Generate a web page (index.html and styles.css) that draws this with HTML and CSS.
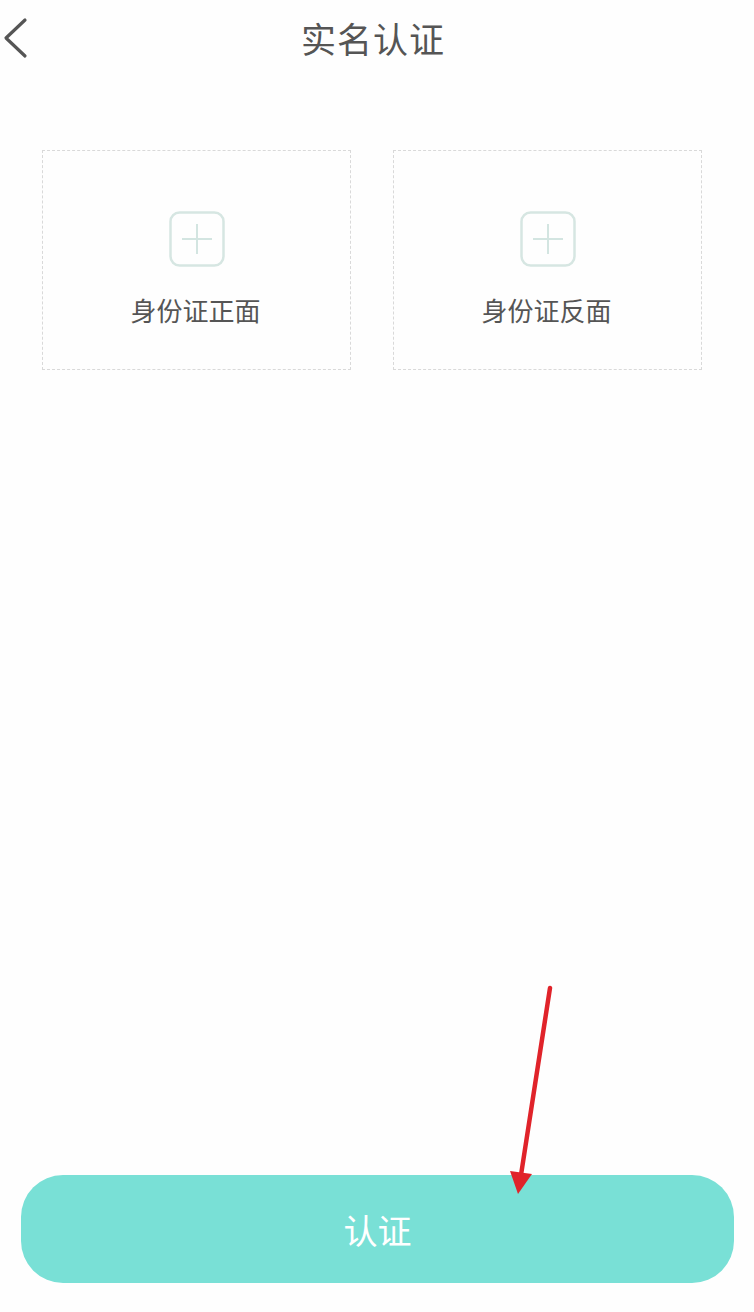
FILE: index.html
```html
<!DOCTYPE html>
<html lang="zh">
<head>
<meta charset="utf-8">
<link rel="stylesheet" href="styles.css">
</head>
<body>
<div class="page">
  <header class="header">
    <svg class="back" width="30" height="44" viewBox="0 0 30 44"><path d="M24 3 L5 21 L24 39" fill="none" stroke="#555" stroke-width="3.2" stroke-linecap="round" stroke-linejoin="round"/></svg>
    <h1 class="title">实名认证</h1>
  </header>
  <section class="cards">
    <div class="card">
      <svg class="plus" width="56" height="56" viewBox="0 0 56 56"><rect x="1.5" y="1.5" width="53" height="53" rx="9" fill="none" stroke="#d6e6e2" stroke-width="2.5"/><path d="M28 13 V43 M13 28 H43" stroke="#d3e5e1" stroke-width="2"/></svg>
      <div class="label">身份证正面</div>
    </div>
    <div class="card">
      <svg class="plus" width="56" height="56" viewBox="0 0 56 56"><rect x="1.5" y="1.5" width="53" height="53" rx="9" fill="none" stroke="#d6e6e2" stroke-width="2.5"/><path d="M28 13 V43 M13 28 H43" stroke="#d3e5e1" stroke-width="2"/></svg>
      <div class="label">身份证反面</div>
    </div>
  </section>
  <button class="submit">认证</button>
  <svg class="arrow" width="90" height="230" viewBox="0 0 90 230"><line x1="70" y1="8" x2="41" y2="195" stroke="#e0232a" stroke-width="4.5" stroke-linecap="round"/><polygon points="30,191 52,194 38,214" fill="#e0232a"/></svg>
</div>
</body>
</html>
```

FILE: styles.css
```css
html, body {
  margin: 0;
  padding: 0;
  background: #fefefe;
}
body {
  font-family: "Noto Sans CJK SC", "Noto Sans", sans-serif;
  color: #555;
}
.page {
  position: relative;
  width: 754px;
  height: 1312px;
  display: flex;
  flex-direction: column;
  box-sizing: border-box;
}
.header {
  position: relative;
  height: 80px;
  display: flex;
  align-items: center;
  justify-content: center;
}
.back {
  position: absolute;
  left: 1px;
  top: 17px;
}
.title {
  margin: 0 8px 6px 0;
  font-size: 35px;
  font-weight: 400;
  color: #555;
  letter-spacing: 1px;
}
.cards {
  display: grid;
  grid-template-columns: 309px 309px;
  column-gap: 42px;
  padding-left: 42px;
  margin-top: 70px;
}
.card {
  height: 220px;
  box-sizing: border-box;
  border: 1.5px dashed #d9d9d9;
  display: flex;
  flex-direction: column;
  align-items: center;
  padding-top: 60px;
}
.plus {
  display: block;
}
.label {
  margin-top: 25px;
  font-size: 26px;
  line-height: 36px;
  color: #555;
  margin-right: 2px;
}
.submit {
  margin: auto 20px 29px 21px;
  height: 108px;
  border: none;
  border-radius: 42px;
  background: #79e0d6;
  color: #fff;
  font-family: "Noto Sans CJK SC", "Noto Sans", sans-serif;
  font-size: 34px;
  padding: 0;
}
.arrow {
  position: absolute;
  left: 480px;
  top: 980px;
}
```
